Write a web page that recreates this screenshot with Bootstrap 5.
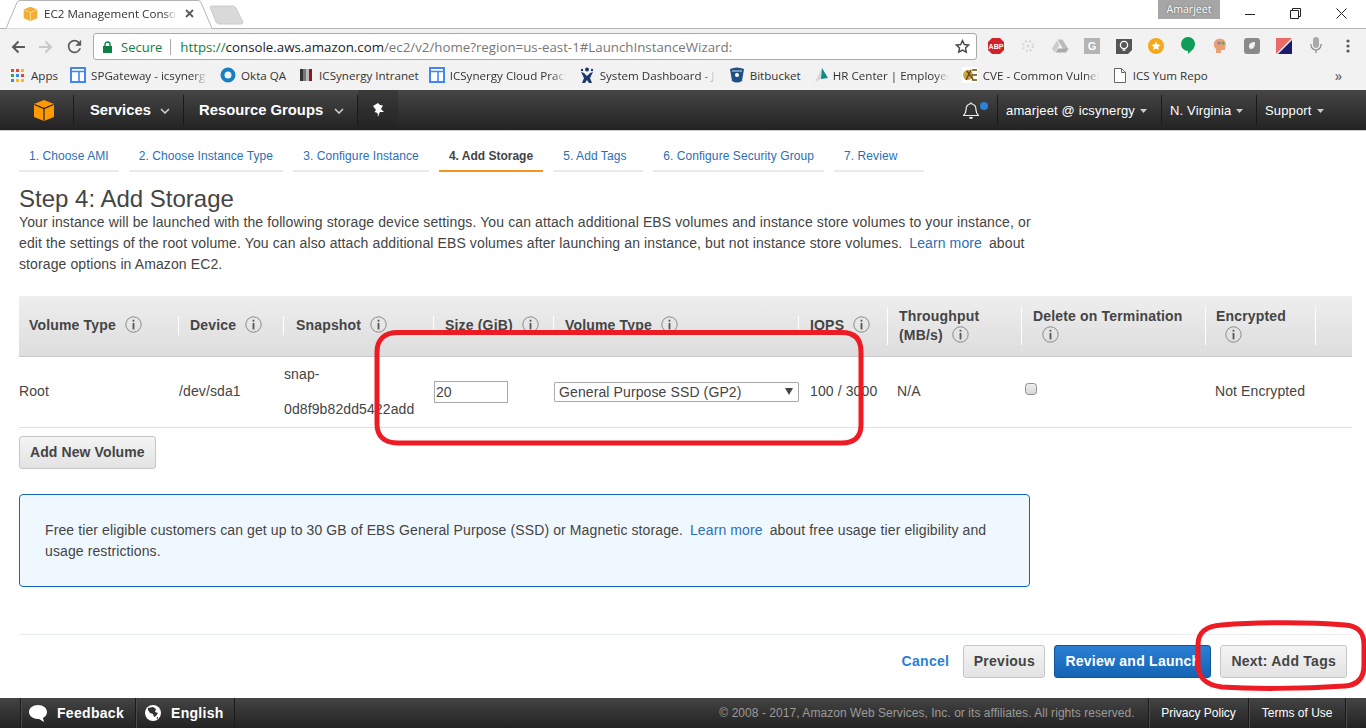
<!DOCTYPE html>
<html lang="en">
<head>
    <meta charset="UTF-8">
    <meta name="viewport" content="width=device-width, initial-scale=1.0">
    <link rel="stylesheet" href="https://cdn.jsdelivr.net/npm/bootstrap@5.3.2/dist/css/bootstrap.min.css">
    <title>EC2 Management Console</title>
    <style>
        html, body { height: 100%; }
        body {
            width: 1366px;
            height: 728px;
            overflow: hidden;
            position: relative;
            font-family: "Liberation Sans", Arial, sans-serif;
            font-size: 14px;
            color: #444;
            background: #fff;
        }

        /* browser chrome */
        .tab-strip { height: 29px; background: #fff; border-bottom: 1px solid #b4b4b4; }
        .tab-strip > * { flex: none; }
        .browser-tab { position: relative; width: 208px; height: 29px; margin-left: 6px; padding: 6px 0 0 17px; font: 11.6px "Open Sans", sans-serif; color: #333; }
        .browser-tab svg.tab-shape { position: absolute; left: 0; top: 0; }
        .browser-tab > .tab-inner { position: relative; }
        .tab-favicon { margin-right: 6px; }
        .tab-title { width: 133px; white-space: nowrap; overflow: hidden; -webkit-mask-image: linear-gradient(90deg, #000 90%, transparent); mask-image: linear-gradient(90deg, #000 90%, transparent); }
        .new-tab { margin: 5px 0 0 -9px; }
        .profile-tag { width: 62px; height: 19px; margin-left: 913px; background: #a6a6a6; color: #fff; font: 10.6px/18px "Open Sans", sans-serif; text-align: center; text-shadow: 0 0 2px #555; }
        .win-btns { margin-left: 25px; gap: 35px; height: 27px; }

        .toolbar { height: 33px; padding: 4px 0 0 11px; background: #f2f2f2; }
        .nav-arrows { gap: 14px; width: 82px; padding-top: 6px; flex: none; }
        .omnibox { width: 884px; height: 27px; flex: none; background: #fff; border: 1px solid #a9a9a9; border-radius: 3px; padding-left: 9px; font: 13.3px "Open Sans", sans-serif; white-space: nowrap; }
        .omni-star { margin-left: auto; margin-right: 6px; }
        .secure-txt { color: #0b8043; margin-left: 9px; font-size: 13px; }
        .omni-sep { width: 1px; height: 16px; background: #aaa; margin: 0 9px 0 8px; }
        .url-https { color: #0b8043; }
        .url-host { color: #222; }
        .url-rest { color: #777; }
        .ext-icons { padding: 4px 0 0 3px; }
        .ext-icons > * { flex: 0 0 32px; }
        .ext-slot { width: 32px; height: 18px; }
        .abp-txt { font: bold 7px "Liberation Sans", sans-serif; fill: #fff; }
        .ext-g { font: bold 11px "Liberation Sans", sans-serif; fill: #fff; }

        .bookmarks { height: 28px; padding: 0 0 2px 11px; background: #f2f2f2; font: 11.6px "Open Sans", sans-serif; color: #333; white-space: nowrap; }
        .bookmark { flex: none; gap: 5px; margin-right: 13px; }
        .bookmark.gap-four { gap: 4px; }
        .bookmark.gap-six { gap: 6px; }
        .bookmark.gap-seven { gap: 7px; }
        .bookmark.end-10 { margin-right: 10px; }
        .bookmark.end-12 { margin-right: 12px; }
        .bookmark.end-14 { margin-right: 14px; }
        .bookmark.end-15 { margin-right: 15px; }
        .bookmark.end-0 { margin-right: 0; }
        .bm-fade { width: 116px; overflow: hidden; -webkit-mask-image: linear-gradient(90deg, #000 88%, transparent); mask-image: linear-gradient(90deg, #000 88%, transparent); }
        .bm-chevron { margin-left: 127px; font-size: 15px; color: #555; }

        /* aws console bar */
        .aws-nav { height: 41px; background: linear-gradient(#464646, #222); border-bottom: 1px solid #ccc; color: #fff; }
        .aws-nav > * { flex: none; }
        .nav-logo { width: 73px; padding-left: 33px; }
        .nav-sep { width: 1px; height: 30px; background: #1a1a1a; }
        .nav-main { font-weight: bold; font-size: 14.8px; padding: 1px 0 0 16px; }
        .nav-main.w-services { width: 109px; }
        .nav-main.w-groups { width: 173px; padding-left: 15px; }
        .nav-main svg { margin-left: auto; margin-right: 13px; }
        .nav-pin { width: 40px; height: 40px; background: linear-gradient(#3a3a3a, #222); }
        .nav-right { font-size: 13px; letter-spacing: .15px; padding: 1px 0 0 8px; }
        .nav-right svg { margin-left: 5px; }
        .nav-right.w-user { width: 163px; }
        .nav-right.w-region { width: 94px; }
        .nav-right.w-support { width: 109px; }
        .bell-wrap { position: relative; width: 34px; margin-left: auto; padding-top: 1px; }
        .bell-dot { position: absolute; left: 17px; top: 1px; width: 8px; height: 8px; border-radius: 50%; background: #2f80d8; }
        .caret-svg { flex: none; }

        /* wizard steps */
        .page-body { padding: 16px 14px 0 19px; letter-spacing: .11px; }
        .wiz-steps { gap: 10px; }
        .wiz-step { display: block; height: 25px; min-width: 90px; padding: 0 10px; line-height: 18px; font-size: 12px; color: #2a6fb5; border-bottom: 2px solid #eaeaea; text-decoration: none; letter-spacing: .08px; }
        .wiz-step.current { color: #444; font-weight: bold; border-bottom-color: #f7931e; letter-spacing: 0; }

        h1.step-title { font-size: 24px; line-height: 26px; margin: 14px 0 0; font-weight: normal; color: #444; letter-spacing: 0; }
        .step-intro { width: 1020px; margin: 0; line-height: 21px; color: #444; }
        .aws-link { color: #2a6fb5; text-decoration: none; margin: 0 3px; }

        .vol-table { width: 1333px; table-layout: fixed; margin: 21px 0 0; border-collapse: collapse; }
        .vol-table col:nth-child(1) { width: 159px; }
        .vol-table col:nth-child(2) { width: 105px; }
        .vol-table col:nth-child(3) { width: 150px; }
        .vol-table col:nth-child(4) { width: 120px; }
        .vol-table col:nth-child(5) { width: 245px; }
        .vol-table col:nth-child(6) { width: 89px; }
        .vol-table col:nth-child(7) { width: 134px; }
        .vol-table col:nth-child(8) { width: 184px; }
        .vol-table col:nth-child(9) { width: 110px; }
        .vol-table col:nth-child(10) { width: 37px; }
        .vol-table > :not(caption) > * > * { padding: 0; box-shadow: none; color: #444; background: none; }
        .vol-table thead tr { height: 60px; background: linear-gradient(#eee, #ddd); }
        .vol-table thead th { border-bottom: 1px solid #c8c8c8; vertical-align: middle; font-size: 14px; line-height: 19px; letter-spacing: .17px; font-weight: bold; }
        .vol-table tbody td { height: 71px; border-bottom: 1px solid #e1e1e1; vertical-align: middle; line-height: 35px; }
        .vol-table > tbody > tr > td:nth-child(2),
        .vol-table > tbody > tr > td:nth-child(3),
        .vol-table > tbody > tr > td:nth-child(4),
        .vol-table > tbody > tr > td:nth-child(5) { padding-left: 1px; }
        .vol-table > tbody > tr > td:nth-child(6) { padding-left: 12px; }
        .vol-table > tbody > tr > td:nth-child(7),
        .vol-table > tbody > tr > td:nth-child(9) { padding-left: 10px; }
        .th-in { border-left: 1px solid #fff; padding-left: 11px; min-height: 19px; }
        .th-first { border-left: 0; padding-left: 10px; }
        .th-tight { padding-left: 10px; }
        .th-wide { padding-left: 12px; }
        .info-ic { margin-left: 5px; vertical-align: -3px; }
        .th-in .info-solo { margin-left: 9px; }
        .size-input { width: 74px; height: 22px; padding: 0 1px; border: 1px solid #a9a9a9; border-radius: 0; font: 14px "Liberation Sans", sans-serif; color: #444; display: block; }
        .type-select {
            width: 245px; height: 20px; padding: 0 0 0 4px; border: 1px solid #a9a9a9; border-radius: 1px;
            appearance: none; -webkit-appearance: none;
            background: #fff url("data:image/svg+xml,%3Csvg xmlns='http://www.w3.org/2000/svg' width='8' height='7'%3E%3Cpath d='M0 0h8L4 7z' fill='%23444'/%3E%3C/svg%3E") no-repeat right 5px center;
            font: 14px "Liberation Sans", sans-serif; letter-spacing: .11px; color: #444; display: block;
        }
        .del-check { width: 12px; height: 12px; margin: -6px 0 0 4px; border: 1px solid #8e8e8e; border-radius: 2px; background: linear-gradient(#eee, #d8d8d8); display: block; float: none; }

        .aws-btn { height: 33px; padding: 0 10px; border: 1px solid #c6c6c6; border-radius: 3px; background: linear-gradient(#f4f4f4, #e3e3e3); color: #444; font-size: 14px; font-weight: bold; letter-spacing: .25px; line-height: 31px; }
        .aws-btn.btn-go { background: linear-gradient(#2b7fd3, #1464b4); border-color: #11549b; color: #fff; }
        .aws-btn.btn-prev { padding: 0 9.5px; }
        .add-vol { margin-top: 8px; letter-spacing: .1px; }

        .free-tier { width: 1011px; height: 93px; margin-top: 25px; padding: 25px; border: 1px solid #1166bb; border-radius: 4px; background: #f0f8ff; line-height: 21px; }

        .wiz-actions { margin-top: 47px; padding: 10px 5px 0 0; border-top: 1px solid #eaeded; }
        .cancel-link { font-weight: bold; letter-spacing: .3px; color: #2a7fd8; text-decoration: none; margin-right: 5px; }
        .wiz-actions .aws-btn { margin-left: 9px; }

        /* page footer */
        .page-foot { position: absolute; left: 0; right: 0; bottom: 0; height: 30px; padding-left: 20px; background: linear-gradient(#444, #222); color: #fff; font-size: 12px; }
        .foot-cell { height: 30px; border-left: 1px solid #1a1a1a; box-shadow: inset 1px 0 0 #4a4a4a; }
        .foot-main { font-weight: bold; font-size: 14px; letter-spacing: .3px; gap: 10px; padding-left: 8px; }
        .foot-main.w-feedback { width: 115px; }
        .foot-main.w-lang { width: 99px; padding-left: 9px; }
        .foot-end { width: 1px; }
        .foot-tail { width: 21px; }
        .foot-copy { color: #9a9a9a; margin-left: auto; padding-right: 13px; letter-spacing: .05px; }
        .foot-link { padding: 0 12.5px; font-weight: normal; }

        .red-notes { position: absolute; left: 0; top: 0; pointer-events: none; }
    </style>
</head>
<body>
    <svg width="0" height="0" class="d-none">
        <symbol id="i-cube" viewBox="0 0 22 22"><path d="M11 1 21 5v13l-10 4L1 18V5z" fill="#f90"/><path d="M1.5 5.5 11 9.5l9.500-4" fill="none" stroke="#222" stroke-width="1.2"/><path d="M11 9.500V21.500" stroke="#222" stroke-width="1.2"/></symbol>
        <symbol id="i-favicon" viewBox="0 0 22 22"><path d="M11 1 21 5v13l-10 4L1 18V5z" fill="#f4ae35"/><path d="M1.5 5.5 11 9.5l9.500-4" fill="none" stroke="#fbdc9c" stroke-width="1.2"/><path d="M11 9.500V21.500" stroke="#fbdc9c" stroke-width="1.2"/></symbol>
        <symbol id="i-info" viewBox="0 0 17 17"><circle cx="8.5" cy="8.5" r="7.7" fill="none" stroke="#888" stroke-width="1"/><rect x="7.6" y="7" width="1.8" height="6.4" fill="#555"/><rect x="7.6" y="3.8" width="1.8" height="1.8" fill="#555"/></symbol>
        <symbol id="i-bm" viewBox="0 0 16 16"><rect x="1" y="1" width="14" height="14" fill="#fff" stroke="#4285f4" stroke-width="2"/><path d="M1 4.500h14M9 4.500V15" stroke="#4285f4" stroke-width="1.6"/></symbol>
        <symbol id="i-caret" viewBox="0 0 10 6"><path d="M1 1l4 4 4-4" fill="none" stroke="#ccc" stroke-width="1.6"/></symbol>
    </svg>

    <div class="tab-strip d-flex align-items-start">
        <div class="browser-tab">
            <svg class="tab-shape" width="208" height="29"><path d="M0 28.500 11 2.500Q12 .5 14 .5H192Q194 .5 195 2.500L206 28.500" fill="#fff" stroke="#b4b4b4"/></svg>
            <div class="tab-inner d-flex align-items-center">
                <svg width="15" height="15" class="tab-favicon"><use href="#i-favicon"/></svg>
                <span class="tab-title">EC2 Management Console</span>
                <svg width="9" height="9" class="ms-2"><path d="M1 1l7 7M8 1L1 8" stroke="#5a5a5a" stroke-width="1.8"/></svg>
            </div>
        </div>
        <svg class="new-tab" width="40" height="20"><path d="M5 2Q5 1 7 1H28Q30 1 31 3L38 17Q38 19 36 19H14Q12 19 11 17Z" fill="#d9d9d9" stroke="#ccc"/></svg>
        <div class="profile-tag">Amarjeet</div>
        <div class="win-btns d-flex align-items-center">
            <svg width="10" height="10"><path d="M0 5.500h10" stroke="#222"/></svg>
            <svg width="11" height="11"><path d="M2.500 2.500V.5h8v8h-2M.5 2.500h8v8h-8z" fill="none" stroke="#222"/></svg>
            <svg width="11" height="11"><path d="M.5.5l10 10M10.500.5l-10 10" stroke="#222"/></svg>
        </div>
    </div>

    <div class="toolbar d-flex align-items-start">
        <div class="nav-arrows d-flex align-items-center">
            <svg width="14" height="14"><path d="M14 7H2M7.500 1.500 2 7l5.500 5.500" fill="none" stroke="#5a5a5a" stroke-width="2"/></svg>
            <svg width="14" height="14"><path d="M0 7h12M6.500 1.500 12 7l-5.500 5.500" fill="none" stroke="#c8c8c8" stroke-width="2"/></svg>
            <svg width="15" height="15" viewBox="3 3 18 18"><path fill="#5a5a5a" d="M17.65 6.35A7.958 7.958 0 0 0 12 4c-4.42 0-7.99 3.58-7.99 8s3.57 8 7.99 8c3.73 0 6.84-2.55 7.73-6h-2.08A5.99 5.99 0 0 1 12 18c-3.31 0-6-2.69-6-6s2.69-6 6-6c1.66 0 3.14.69 4.22 1.78L13 11h7V4l-2.35 2.35z"/></svg>
        </div>
        <div class="omnibox d-flex align-items-center">
            <svg width="9" height="12"><path d="M2 5V3.500a2.500 2.500 0 0 1 5 0V5" fill="none" stroke="#0b8043" stroke-width="1.4"/><rect y="5" width="9" height="7" fill="#0b8043"/></svg>
            <span class="secure-txt">Secure</span>
            <span class="omni-sep"></span>
            <span><span class="url-https">https://</span><span class="url-host">console.aws.amazon.com</span><span class="url-rest">/ec2/v2/home?region=us-east-1#LaunchInstanceWizard:</span></span>
            <svg width="15" height="15" class="omni-star" viewBox="0 0 24 24"><path d="M12 2.500l2.900 6.300 6.900.8-5.100 4.700 1.400 6.800-6.100-3.400-6.100 3.400 1.400-6.800L2.200 9.600l6.900-.8z" fill="none" stroke="#444" stroke-width="2.2"/></svg>
        </div>
        <div class="ext-icons d-flex align-items-center">
            <svg class="ext-slot" viewBox="-7 0 32 18"><path d="M5 1h8l4 4v8l-4 4H5l-4-4V5z" fill="#d3222a"/><text x="9" y="11.500" text-anchor="middle" class="abp-txt">ABP</text></svg>
            <svg class="ext-slot" viewBox="-8 -1 32 18"><g fill="none" stroke="#d8d8d8" stroke-width="2.400" stroke-dasharray="2 2"><circle cx="8" cy="8" r="5"/></g><circle cx="8" cy="8" r="1.600" fill="#d8d8d8"/></svg>
            <svg class="ext-slot" viewBox="-7.500 -1.500 32 18"><path d="M6 1h5l6 10h-5z" fill="#bbb"/><path d="M5.500 2 8 6.500 3 14 .5 10z" fill="#ccc"/><path d="M4 14l2.500-4H17l-2.500 4z" fill="#aaa"/></svg>
            <svg class="ext-slot" viewBox="-8 -1 32 18"><rect width="16" height="16" fill="#b4b4b4"/><text x="8" y="12" text-anchor="middle" class="ext-g">G</text></svg>
            <svg class="ext-slot" viewBox="-8 -1 32 18"><path d="M0 1h16v11l-4 4H0z" fill="#555"/><circle cx="8" cy="7" r="3.600" fill="none" stroke="#fff" stroke-width="1.300"/><path d="M6.500 12h3" stroke="#fff" stroke-width="1.400"/></svg>
            <svg class="ext-slot" viewBox="-8 -1 32 18"><circle cx="8" cy="8" r="8" fill="#f5a81c"/><path d="M8 3.400l1.400 3 3.200.3-2.400 2.200.7 3.200L8 10.400l-2.900 1.700.7-3.200-2.400-2.200 3.200-.3z" fill="#fff"/></svg>
            <svg class="ext-slot" viewBox="-9 0 32 18"><path d="M7 0a6.800 6.800 0 0 1 7 7c0 4-3.500 7-7 10V14a7 7 0 0 1 0-14z" fill="#0f9d58"/></svg>
            <svg class="ext-slot" viewBox="-9 -1 32 18"><path d="M5 1c5-1 8 2 8 6l-1 2v3H8v3H3v-4C-1 7 1 2 5 1z" fill="#e8a077"/><circle cx="6" cy="5" r="1.600" fill="#8a7bc0"/><circle cx="10" cy="5" r="1.600" fill="#6aa84f"/></svg>
            <svg class="ext-slot" viewBox="-8 -1 32 18"><rect width="16" height="16" rx="3" fill="#8a8a8a"/><path d="M5 8c0-3 3-4 6-4 0 4-1 7-4 7-1 0-2-1-2-3z" fill="#f2f2f2"/></svg>
            <svg class="ext-slot" viewBox="-8 -1 32 18"><path d="M0 0h16L0 16z" fill="#ea6a68"/><path d="M16 2v14H2z" fill="#1c1c6e"/></svg>
            <svg class="ext-slot" viewBox="-10 0 32 18"><rect x="3" y="0" width="6" height="11" rx="3" fill="#aaa"/><path d="M1 7v1a5 5 0 0 0 10 0V7M6 13v3" fill="none" stroke="#888" stroke-width="1.200"/></svg>
            <svg class="ext-slot" viewBox="-14 -2 32 18"><circle cx="2" cy="2" r="1.600" fill="#5a5a5a"/><circle cx="2" cy="7" r="1.600" fill="#5a5a5a"/><circle cx="2" cy="12" r="1.600" fill="#5a5a5a"/></svg>
        </div>
    </div>

    <div class="bookmarks d-flex align-items-center">
        <div class="bookmark gap-seven end-12 d-flex align-items-center">
            <svg width="13" height="13">
                <rect width="3" height="3" fill="#ea4335"/><rect x="5" width="3" height="3" fill="#ea4335"/><rect x="10" width="3" height="3" fill="#fbbc05"/>
                <rect y="5" width="3" height="3" fill="#34a853"/><rect x="5" y="5" width="3" height="3" fill="#4285f4"/><rect x="10" y="5" width="3" height="3" fill="#ea4335"/>
                <rect y="10" width="3" height="3" fill="#4285f4"/><rect x="5" y="10" width="3" height="3" fill="#fbbc05"/><rect x="10" y="10" width="3" height="3" fill="#fbbc05"/>
            </svg>
            <span>Apps</span>
        </div>
        <div class="bookmark d-flex align-items-center"><svg width="16" height="16"><use href="#i-bm"/></svg><span class="bm-fade">SPGateway - icsynergy</span></div>
        <div class="bookmark end-14 d-flex align-items-center"><svg width="16" height="16"><circle cx="8" cy="8" r="5.500" fill="none" stroke="#1580c4" stroke-width="4"/></svg><span>Okta QA</span></div>
        <div class="bookmark gap-seven end-10 d-flex align-items-center"><svg width="12" height="12"><rect width="3" height="12" fill="#333"/><rect x="3" width="3" height="12" fill="#777"/><rect x="6" width="3" height="12" fill="#bbb"/><rect x="9" width="3" height="12" fill="#8b1a1a"/></svg><span>ICSynergy Intranet</span></div>
        <div class="bookmark end-14 d-flex align-items-center"><svg width="16" height="16"><use href="#i-bm"/></svg><span class="bm-fade">ICSynergy Cloud Practice</span></div>
        <div class="bookmark gap-six end-14 d-flex align-items-center"><svg width="14" height="16"><circle cx="7" cy="2.500" r="2" fill="#1a3a6b"/><circle cx="2" cy="3" r="1.200" fill="#1a3a6b"/><circle cx="12" cy="3" r="1.200" fill="#1a3a6b"/><path d="M1 5l3 1 3 3 3-3 3-1-3 6 2 5H9L7 13l-2 3H2l2-5z" fill="#1a3a6b"/></svg><span class="bm-fade">System Dashboard - JIRA</span></div>
        <div class="bookmark gap-six end-12 d-flex align-items-center"><svg width="14" height="16"><path d="M0 2Q7-1 14 2l-2 12Q7 17 2 14z" fill="#205081"/><circle cx="7" cy="8" r="2" fill="#fff"/><path d="M2 4h10" stroke="#fff" stroke-width=".8"/></svg><span>Bitbucket</span></div>
        <div class="bookmark gap-four d-flex align-items-center"><svg width="16" height="16"><path d="M9 1 2 15l6-3z" fill="#d8d8d8"/><path d="M9 1l6 10-7 1z" fill="#0f8a8a"/></svg><span class="bm-fade">HR Center | Employee</span></div>
        <div class="bookmark end-15 d-flex align-items-center"><svg width="16" height="16"><rect width="16" height="16" fill="#fff"/><circle cx="6" cy="8" r="5" fill="#c9a24a"/><path d="M9 3l-5 10M5 4l6 8M10 3h5M10 8h5M10 13h5" stroke="#6b4a12" stroke-width="1.500"/></svg><span class="bm-fade">CVE - Common Vulnerabilities</span></div>
        <div class="bookmark gap-seven end-0 d-flex align-items-center"><svg width="12" height="15"><path d="M.5.5h7l4 4v10H.5zM7.500.5v4h4" fill="#fff" stroke="#666"/></svg><span>ICS Yum Repo</span></div>
        <span class="bm-chevron">»</span>
    </div>

    <div class="aws-nav d-flex align-items-center">
        <div class="nav-logo"><svg width="22" height="22" class="d-block"><use href="#i-cube"/></svg></div>
        <div class="nav-sep"></div>
        <div class="nav-main w-services d-flex align-items-center">Services <svg width="10" height="6" class="caret-svg"><use href="#i-caret"/></svg></div>
        <div class="nav-sep"></div>
        <div class="nav-main w-groups d-flex align-items-center">Resource Groups <svg width="10" height="6" class="caret-svg"><use href="#i-caret"/></svg></div>
        <div class="nav-sep"></div>
        <div class="nav-pin d-flex align-items-center justify-content-center"><svg width="14" height="14"><path d="M7 0l2 2 3 .5L10 6l3 3H9l-1 2-1 3-.5-4-3-1 1.500-2L2 3z" fill="#fff"/></svg></div>
        <div class="bell-wrap">
            <svg width="16" height="18" class="d-block"><path d="M8 1a1 1 0 0 1 1 1c3 .6 4 3 4 6 0 3 1 4 2.500 5.500H.5C2 12 3 11 3 8c0-3 1-5.400 4-6a1 1 0 0 1 1-1z" fill="none" stroke="#eee" stroke-width="1.200"/><path d="M6 15h4a2 2 0 0 1-4 0z" fill="#eee"/></svg>
            <span class="bell-dot"></span>
        </div>
        <div class="nav-sep"></div>
        <div class="nav-right w-user d-flex align-items-center">amarjeet @ icsynergy <svg width="7" height="4" class="caret-svg"><path d="M0 0h7L3.500 4z" fill="#ccc"/></svg></div>
        <div class="nav-sep"></div>
        <div class="nav-right w-region d-flex align-items-center">N. Virginia <svg width="7" height="4" class="caret-svg"><path d="M0 0h7L3.500 4z" fill="#ccc"/></svg></div>
        <div class="nav-sep"></div>
        <div class="nav-right w-support d-flex align-items-center">Support <svg width="7" height="4" class="caret-svg"><path d="M0 0h7L3.500 4z" fill="#ccc"/></svg></div>
    </div>

    <div class="page-body">
        <div class="wiz-steps d-flex">
            <a class="wiz-step" href="#">1. Choose AMI</a>
            <a class="wiz-step" href="#">2. Choose Instance Type</a>
            <a class="wiz-step" href="#">3. Configure Instance</a>
            <a class="wiz-step current" href="#">4. Add Storage</a>
            <a class="wiz-step" href="#">5. Add Tags</a>
            <a class="wiz-step" href="#">6. Configure Security Group</a>
            <a class="wiz-step" href="#">7. Review</a>
        </div>

        <h1 class="step-title">Step 4: Add Storage</h1>
        <p class="step-intro">Your instance will be launched with the following storage device settings. You can attach additional EBS volumes and instance store volumes to your instance, or edit the settings of the root volume. You can also attach additional EBS volumes after launching an instance, but not instance store volumes. <a class="aws-link" href="#">Learn more</a> about storage options in Amazon EC2.</p>

        <table class="table vol-table">
            <colgroup>
                <col><col><col><col><col><col><col><col><col><col>
            </colgroup>
            <thead>
                <tr>
                    <th><div class="th-in th-first">Volume Type <svg class="info-ic" width="17" height="17"><use href="#i-info"/></svg></div></th>
                    <th><div class="th-in">Device <svg class="info-ic" width="17" height="17"><use href="#i-info"/></svg></div></th>
                    <th><div class="th-in th-wide">Snapshot <svg class="info-ic" width="17" height="17"><use href="#i-info"/></svg></div></th>
                    <th><div class="th-in">Size (GiB) <svg class="info-ic" width="17" height="17"><use href="#i-info"/></svg></div></th>
                    <th><div class="th-in">Volume Type <svg class="info-ic" width="17" height="17"><use href="#i-info"/></svg></div></th>
                    <th><div class="th-in">IOPS <svg class="info-ic" width="17" height="17"><use href="#i-info"/></svg></div></th>
                    <th><div class="th-in">Throughput<br>(MB/s) <svg class="info-ic" width="17" height="17"><use href="#i-info"/></svg></div></th>
                    <th><div class="th-in">Delete on Termination<br><svg class="info-ic info-solo" width="17" height="17"><use href="#i-info"/></svg></div></th>
                    <th><div class="th-in th-tight">Encrypted<br><svg class="info-ic info-solo" width="17" height="17"><use href="#i-info"/></svg></div></th>
                    <th><div class="th-in">&nbsp;<br>&nbsp;</div></th>
                </tr>
            </thead>
            <tbody>
                <tr>
                    <td>Root</td>
                    <td>/dev/sda1</td>
                    <td>snap-<br>0d8f9b82dd5422add</td>
                    <td><input class="size-input" type="text" value="20" aria-label="Size"></td>
                    <td><select class="type-select" aria-label="Volume Type"><option>General Purpose SSD (GP2)</option></select></td>
                    <td>100 / 3000</td>
                    <td>N/A</td>
                    <td><input class="form-check-input del-check" type="checkbox" aria-label="Delete on Termination"></td>
                    <td>Not Encrypted</td>
                    <td></td>
                </tr>
            </tbody>
        </table>

        <button class="btn aws-btn add-vol" type="button">Add New Volume</button>

        <div class="free-tier">Free tier eligible customers can get up to 30 GB of EBS General Purpose (SSD) or Magnetic storage. <a class="aws-link" href="#">Learn more</a> about free usage tier eligibility and usage restrictions.</div>

        <div class="wiz-actions d-flex justify-content-end align-items-center">
            <a class="cancel-link" href="#">Cancel</a>
            <button class="btn aws-btn btn-prev" type="button">Previous</button>
            <button class="btn aws-btn btn-go" type="button">Review and Launch</button>
            <button class="btn aws-btn" type="button">Next: Add Tags</button>
        </div>
    </div>

    <div class="page-foot d-flex align-items-center">
        <div class="foot-cell foot-main w-feedback d-flex align-items-center">
            <svg width="18" height="17"><path d="M9 0c5 0 9 3 9 7 0 3-2 5-4 6l1 4-5-3H9C4 14 0 11 0 7s4-7 9-7z" fill="#fff"/></svg>Feedback
        </div>
        <div class="foot-cell foot-main w-lang d-flex align-items-center">
            <svg width="16" height="16"><circle cx="8" cy="8" r="8" fill="#fff"/><path d="M3 3l5-1 3 2-1 3 3 1-2 3-2 1-1-3-3-1-2-3zM11 13l2-1v2z" fill="#333"/></svg>English
        </div>
        <div class="foot-cell foot-end"></div>
        <div class="foot-copy">© 2008 - 2017, Amazon Web Services, Inc. or its affiliates. All rights reserved.</div>
        <div class="foot-cell d-flex align-items-center foot-link">Privacy Policy</div>
        <div class="foot-cell d-flex align-items-center foot-link">Terms of Use</div>
        <div class="foot-cell foot-tail"></div>
    </div>

    <!-- red marker drawn on top of the screenshot -->
    <svg class="red-notes" width="1366" height="728" fill="none" stroke="#ed1c24" stroke-width="5">
        <path d="M398 332.500H842C855 332.500 861 339 861 352V425C861 438 853 443 842 443H398C384 443 377 436 377 424V352C377 340 384 332.500 398 332.500Z"/>
        <path d="M1222 625C1260 622 1310 622 1345 625C1358 626 1364 632 1364 645V665C1364 678 1358 685 1345 686C1300 689 1250 689 1222 687C1206 685 1198 678 1198 664V645C1198 632 1206 626 1222 625Z"/>
    </svg>
</body>
</html>
